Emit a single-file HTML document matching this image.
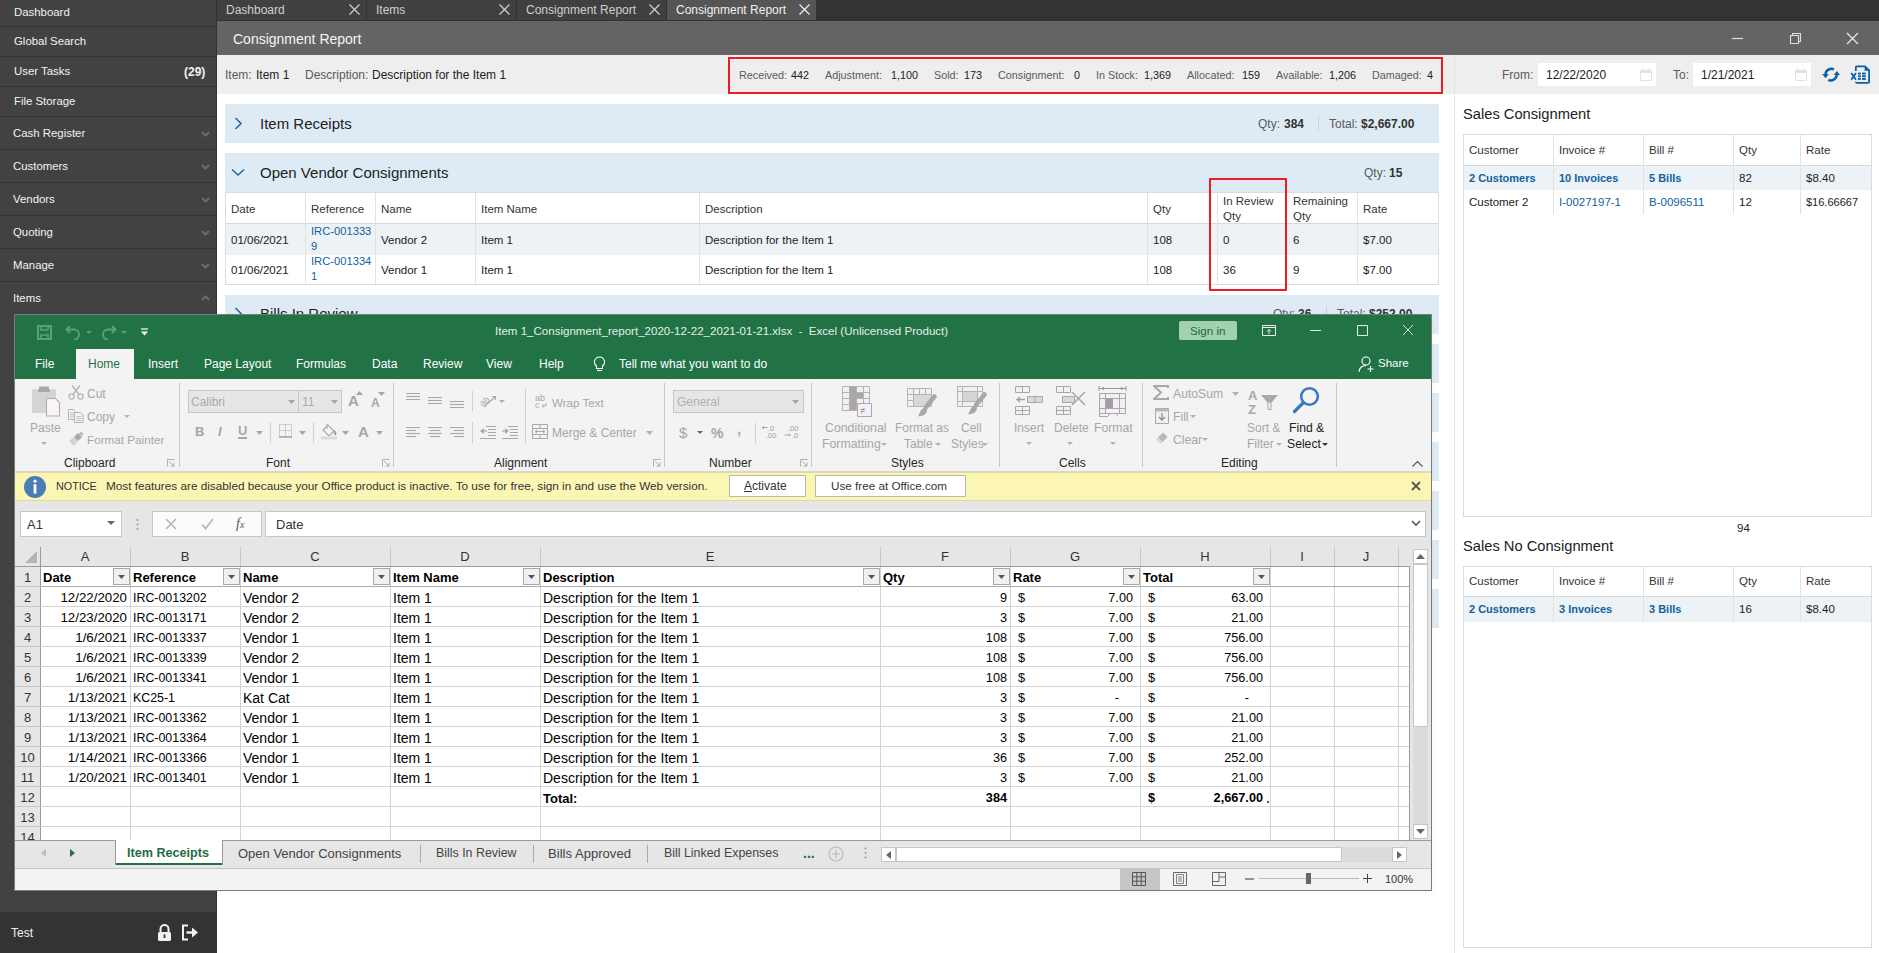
<!DOCTYPE html>
<html><head><meta charset="utf-8">
<style>
*{box-sizing:border-box;margin:0;padding:0}
html,body{width:1879px;height:953px;overflow:hidden;background:#fff;font-family:"Liberation Sans",sans-serif;}
.a{position:absolute}
.nw{white-space:nowrap}
/* sidebar */
#sb{left:0;top:0;width:216px;height:953px;background:#424242}
#sb .it{position:absolute;left:0;width:216px;color:#f2f2f2;font-size:11.4px;border-bottom:1px solid #333}
#sb .it span{position:absolute;left:14px}
#sb .chev{position:absolute;left:200px;width:7px;height:7px;border-right:1.2px solid #6a6a6a;border-bottom:1.2px solid #6a6a6a;transform:rotate(45deg)}
#vline{left:216px;top:0;width:1px;height:953px;background:#333}
/* tabs */
#tabs{left:217px;top:0;width:1662px;height:21px;background:#333}
.tab{position:absolute;top:0;height:20px;width:149px;background:#404040;color:#cfcfcf;font-size:12px}
.tab span{position:absolute;left:9px;top:3px}
.tab svg{position:absolute;left:132px;top:4px}
.lab{color:#5a5a5a;font-size:10.8px}
.val{color:#222;font-size:10.8px}
.pnl{left:225px;width:1214px;height:39px;background:#deebf5}
.th{font-size:11.5px;color:#333}
.td{font-size:11.5px;color:#222}
.lnk{color:#11629f}
.b{font-weight:bold;font-size:11px}
.cl{font-size:14px;color:#000}
</style></head>
<body>
<!-- SIDEBAR -->
<div id="sb" class="a">
  <div class="it" style="top:0;height:27px"><span style="top:6px">Dashboard</span></div>
  <div class="it" style="top:27px;height:30px"><span style="top:8px">Global Search</span></div>
  <div class="it" style="top:57px;height:30px"><span style="top:8px">User Tasks</span><b style="position:absolute;left:184px;top:8px;font-size:12px">(29)</b></div>
  <div class="it" style="top:87px;height:30px"><span style="top:8px">File Storage</span></div>
  <div class="it" style="top:117px;height:33px"><span style="left:13px;top:10px">Cash Register</span><svg style="position:absolute;left:201px;top:14px" width="9" height="6"><path d="M1 1L4.5 4.5L8 1" fill="none" stroke="#6c6c6c" stroke-width="2"/></svg></div>
  <div class="it" style="top:150px;height:33px"><span style="left:13px;top:10px">Customers</span><svg style="position:absolute;left:201px;top:14px" width="9" height="6"><path d="M1 1L4.5 4.5L8 1" fill="none" stroke="#6c6c6c" stroke-width="2"/></svg></div>
  <div class="it" style="top:183px;height:33px"><span style="left:13px;top:10px">Vendors</span><svg style="position:absolute;left:201px;top:14px" width="9" height="6"><path d="M1 1L4.5 4.5L8 1" fill="none" stroke="#6c6c6c" stroke-width="2"/></svg></div>
  <div class="it" style="top:216px;height:33px"><span style="left:13px;top:10px">Quoting</span><svg style="position:absolute;left:201px;top:14px" width="9" height="6"><path d="M1 1L4.5 4.5L8 1" fill="none" stroke="#6c6c6c" stroke-width="2"/></svg></div>
  <div class="it" style="top:249px;height:33px"><span style="left:13px;top:10px">Manage</span><svg style="position:absolute;left:201px;top:14px" width="9" height="6"><path d="M1 1L4.5 4.5L8 1" fill="none" stroke="#6c6c6c" stroke-width="2"/></svg></div>
  <div class="it" style="top:282px;height:33px;border:0"><span style="left:13px;top:10px">Items</span><svg style="position:absolute;left:201px;top:13px" width="9" height="6"><path d="M1 5L4.5 1.5L8 5" fill="none" stroke="#6c6c6c" stroke-width="2"/></svg></div>
  <div class="a" style="left:0;top:912px;width:216px;height:41px;background:#333"></div>
  <div class="a nw" style="left:11px;top:926px;color:#f2f2f2;font-size:12px">Test</div>
  <svg class="a" style="left:157px;top:924px" width="15" height="17"><path d="M3.5 8V5a4 4 0 0 1 8 0v3" fill="none" stroke="#f2f2f2" stroke-width="2"/><rect x="1" y="8" width="13" height="9" rx="1.5" fill="#f2f2f2"/><rect x="6.6" y="10.5" width="1.8" height="3.5" fill="#333"/></svg>
  <svg class="a" style="left:181px;top:924px" width="18" height="17"><path d="M7 1.5H2v14h5" fill="none" stroke="#f2f2f2" stroke-width="2"/><path d="M5.5 8.5h8" stroke="#f2f2f2" stroke-width="2.4"/><path d="M11 3.5l6 5-6 5z" fill="#f2f2f2"/></svg>
</div>
<div id="vline" class="a"></div>

<!-- TABS -->
<div id="tabs" class="a">
  <div class="tab" style="left:0"><span>Dashboard</span><svg width="11" height="11"><path d="M0.5 0.5L10.5 10.5M10.5 0.5L0.5 10.5" stroke="#d0d0d0" stroke-width="1.2"/></svg></div>
  <div class="tab" style="left:150px"><span>Items</span><svg width="11" height="11"><path d="M0.5 0.5L10.5 10.5M10.5 0.5L0.5 10.5" stroke="#d0d0d0" stroke-width="1.2"/></svg></div>
  <div class="tab" style="left:300px"><span>Consignment Report</span><svg width="11" height="11"><path d="M0.5 0.5L10.5 10.5M10.5 0.5L0.5 10.5" stroke="#d0d0d0" stroke-width="1.2"/></svg></div>
  <div class="tab" style="left:450px;background:#555;color:#f0f0f0"><span>Consignment Report</span><svg width="11" height="11"><path d="M0.5 0.5L10.5 10.5M10.5 0.5L0.5 10.5" stroke="#f0f0f0" stroke-width="1.2"/></svg></div>
</div>

<!-- REPORT HEADER -->
<div class="a" style="left:217px;top:21px;width:1662px;height:34px;background:#646464"></div>
<div class="a nw" style="left:233px;top:31px;color:#f4f4f4;font-size:14px">Consignment Report</div>


<!-- INFO BAR -->
<div class="a" style="left:217px;top:55px;width:1237px;height:39px;background:#eeeeee"></div>
<div class="a" style="left:1455px;top:55px;width:424px;height:39px;background:#eeeeee"></div>
<div class="a" style="left:1454px;top:55px;width:1px;height:898px;background:#e4e4e4"></div>
<div class="a nw lab" style="left:225px;top:68px;font-size:12px">Item:</div><div class="a nw val" style="left:256px;top:68px;font-size:12px">Item 1</div>
<div class="a nw lab" style="left:305px;top:68px;font-size:12px">Description:</div><div class="a nw val" style="left:372px;top:68px;font-size:12px">Description for the Item 1</div>
<div class="a" style="left:728px;top:57px;width:715px;height:37px;border:2.5px solid #ec1c24"></div>
<div class="a nw lab" style="left:739px;top:69px">Received:</div><div class="a nw val" style="left:791px;top:69px">442</div>
<div class="a nw lab" style="left:825px;top:69px">Adjustment:</div><div class="a nw val" style="left:891px;top:69px">1,100</div>
<div class="a nw lab" style="left:934px;top:69px">Sold:</div><div class="a nw val" style="left:964px;top:69px">173</div>
<div class="a nw lab" style="left:998px;top:69px">Consignment:</div><div class="a nw val" style="left:1074px;top:69px">0</div>
<div class="a nw lab" style="left:1096px;top:69px">In Stock:</div><div class="a nw val" style="left:1144px;top:69px">1,369</div>
<div class="a nw lab" style="left:1187px;top:69px">Allocated:</div><div class="a nw val" style="left:1242px;top:69px">159</div>
<div class="a nw lab" style="left:1276px;top:69px">Available:</div><div class="a nw val" style="left:1329px;top:69px">1,206</div>
<div class="a nw lab" style="left:1372px;top:69px">Damaged:</div><div class="a nw val" style="left:1427px;top:69px">4</div>

<!-- header window controls -->
<svg class="a" style="left:1731px;top:32px" width="14" height="12"><path d="M1 6.5H12" stroke="#e0e0e0" stroke-width="1.2"/></svg>
<svg class="a" style="left:1789px;top:32px" width="14" height="12"><path d="M1.5 3.5h8v8h-8zM3.5 3.5V1.5h8v8h-2" fill="none" stroke="#e0e0e0" stroke-width="1.1"/></svg>
<svg class="a" style="left:1846px;top:32px" width="13" height="13"><path d="M1 1L12 12M12 1L1 12" stroke="#e8e8e8" stroke-width="1.3"/></svg>

<!-- date filters -->
<div class="a nw lab" style="left:1502px;top:68px;font-size:12px">From:</div>
<div class="a" style="left:1538px;top:63px;width:118px;height:23px;background:#fff"></div>
<div class="a nw val" style="left:1546px;top:68px;font-size:12px">12/22/2020</div>
<div class="a nw lab" style="left:1673px;top:68px;font-size:12px">To:</div>
<div class="a" style="left:1693px;top:63px;width:118px;height:23px;background:#fff"></div>
<div class="a nw val" style="left:1701px;top:68px;font-size:12px">1/21/2021</div>
<svg class="a" style="left:1639px;top:67px" width="14" height="15"><path d="M1.5 3.5h11v10h-11z" fill="none" stroke="#e2e2e2" stroke-width="1"/><path d="M1.5 4h11v2h-11z" fill="#e2e2e2"/><path d="M4 1v3M10 1v3" stroke="#e2e2e2"/></svg>
<svg class="a" style="left:1794px;top:67px" width="14" height="15"><path d="M1.5 3.5h11v10h-11z" fill="none" stroke="#e2e2e2" stroke-width="1"/><path d="M1.5 4h11v2h-11z" fill="#e2e2e2"/><path d="M4 1v3M10 1v3" stroke="#e2e2e2"/></svg>
<svg class="a" style="left:1821px;top:66px" width="20" height="17"><g fill="none" stroke="#0b5fa5" stroke-width="2.4"><path d="M12.9 3.3A6 6 0 0 0 4.5 8.3"/><path d="M7.2 13.8A6 6 0 0 0 15.8 8.9"/></g><path d="M1.2 8L7.8 8L4.5 12.2z" fill="#0b5fa5"/><path d="M12.8 8.9L19 8.9L15.9 5z" fill="#0b5fa5"/></svg>
<svg class="a" style="left:1850px;top:65px" width="21" height="19"><path d="M5.8 6V2.4a1.1 1.1 0 0 1 1.1-1.1H15L19.1 5.4V16.7a1.1 1.1 0 0 1-1.1 1.1H7a1.1 1.1 0 0 1-1.1-1.1" fill="none" stroke="#0b5fa5" stroke-width="1.8"/><path d="M14.6 1.3V5.8H19.1z" fill="#0b5fa5"/><path d="M1.3 8L6 14.8M6 8L1.3 14.8" stroke="#0b5fa5" stroke-width="1.8"/><g fill="#0b5fa5"><rect x="8" y="7.6" width="2.8" height="1.9"/><rect x="12" y="7.6" width="3.8" height="1.9"/><rect x="8" y="10.3" width="2.8" height="1.9"/><rect x="12" y="10.3" width="3.8" height="1.9"/><rect x="8" y="13" width="2.8" height="1.9"/><rect x="12" y="13" width="3.8" height="1.9"/></g></svg>


<!-- REPORT PANELS -->
<div class="a pnl" style="top:104px"></div>
<svg class="a" style="left:234px;top:117px" width="9" height="13"><path d="M1.5 1L7 6.5L1.5 12" fill="none" stroke="#1f6aa5" stroke-width="1.6"/></svg>
<div class="a nw" style="left:260px;top:115px;font-size:15px;color:#222">Item Receipts</div>
<div class="a nw lab" style="left:1258px;top:117px;font-size:12px">Qty:</div><div class="a nw val" style="left:1284px;top:117px;font-size:12px;font-weight:bold;color:#333">384</div>
<div class="a" style="left:1318px;top:116px;width:1px;height:14px;background:#c8d4de"></div>
<div class="a nw lab" style="left:1329px;top:117px;font-size:12px">Total:</div><div class="a nw val" style="left:1361px;top:117px;font-size:12px;font-weight:bold;color:#333">$2,667.00</div>

<div class="a pnl" style="top:153px"></div>
<svg class="a" style="left:231px;top:168px" width="14" height="9"><path d="M1 1.5L7 7L13 1.5" fill="none" stroke="#1f6aa5" stroke-width="1.6"/></svg>
<div class="a nw" style="left:260px;top:164px;font-size:15px;color:#222">Open Vendor Consignments</div>
<div class="a nw lab" style="left:1364px;top:166px;font-size:12px">Qty:</div><div class="a nw val" style="left:1389px;top:166px;font-size:12px;font-weight:bold;color:#333">15</div>

<div class="a" style="left:225px;top:192px;width:1214px;height:93px;border:1px solid #dcdcdc;background:#fff"></div>
<div class="a" style="left:226px;top:223px;width:1212px;height:31px;background:#ecf2f6;border-top:1px solid #d8d8d8"></div>
<div class="a" style="left:226px;top:254px;width:1212px;height:1px;background:#f0f0f0"></div>
<div class="a" style="left:305px;top:193px;width:1px;height:91px;background:#e2e2e2"></div>
<div class="a" style="left:375px;top:193px;width:1px;height:91px;background:#e2e2e2"></div>
<div class="a" style="left:475px;top:193px;width:1px;height:91px;background:#e2e2e2"></div>
<div class="a" style="left:699px;top:193px;width:1px;height:91px;background:#e2e2e2"></div>
<div class="a" style="left:1147px;top:193px;width:1px;height:91px;background:#e2e2e2"></div>
<div class="a" style="left:1217px;top:193px;width:1px;height:91px;background:#e2e2e2"></div>
<div class="a" style="left:1285px;top:193px;width:1px;height:91px;background:#e2e2e2"></div>
<div class="a" style="left:1357px;top:193px;width:1px;height:91px;background:#e2e2e2"></div>

<div class="a nw th" style="left:231px;top:203px">Date</div>
<div class="a nw th" style="left:311px;top:203px">Reference</div>
<div class="a nw th" style="left:381px;top:203px">Name</div>
<div class="a nw th" style="left:481px;top:203px">Item Name</div>
<div class="a nw th" style="left:705px;top:203px">Description</div>
<div class="a nw th" style="left:1153px;top:203px">Qty</div>
<div class="a nw th" style="left:1223px;top:194px;line-height:15px">In Review<br>Qty</div>
<div class="a nw th" style="left:1293px;top:194px;line-height:15px">Remaining<br>Qty</div>
<div class="a nw th" style="left:1363px;top:203px">Rate</div>

<div class="a nw td" style="left:231px;top:234px">01/06/2021</div>
<div class="a nw td lnk" style="left:311px;top:224px;line-height:14.5px;font-size:11.2px">IRC-001333<br>9</div>
<div class="a nw td" style="left:381px;top:234px">Vendor 2</div>
<div class="a nw td" style="left:481px;top:234px">Item 1</div>
<div class="a nw td" style="left:705px;top:234px">Description for the Item 1</div>
<div class="a nw td" style="left:1153px;top:234px">108</div>
<div class="a nw td" style="left:1223px;top:234px">0</div>
<div class="a nw td" style="left:1293px;top:234px">6</div>
<div class="a nw td" style="left:1363px;top:234px">$7.00</div>

<div class="a nw td" style="left:231px;top:264px">01/06/2021</div>
<div class="a nw td lnk" style="left:311px;top:254px;line-height:14.5px;font-size:11.2px">IRC-001334<br>1</div>
<div class="a nw td" style="left:381px;top:264px">Vendor 1</div>
<div class="a nw td" style="left:481px;top:264px">Item 1</div>
<div class="a nw td" style="left:705px;top:264px">Description for the Item 1</div>
<div class="a nw td" style="left:1153px;top:264px">108</div>
<div class="a nw td" style="left:1223px;top:264px">36</div>
<div class="a nw td" style="left:1293px;top:264px">9</div>
<div class="a nw td" style="left:1363px;top:264px">$7.00</div>
<div class="a" style="left:1209px;top:178px;width:78px;height:113px;border:2.5px solid #ec1c24;border-radius:1px"></div>
<div class="a pnl" style="top:295px"></div>
<div class="a pnl" style="top:344px"></div>
<div class="a pnl" style="top:393px"></div>
<div class="a pnl" style="top:442px"></div>
<div class="a pnl" style="top:491px"></div>
<div class="a pnl" style="top:540px"></div>
<div class="a pnl" style="top:589px"></div>

<svg class="a" style="left:234px;top:307px" width="9" height="13"><path d="M1.5 1L7 6.5L1.5 12" fill="none" stroke="#1f6aa5" stroke-width="1.6"/></svg>
<div class="a nw" style="left:260px;top:305px;font-size:15px;color:#222">Bills In Review</div>
<div class="a nw lab" style="left:1273px;top:307px;font-size:12px">Qty:</div><div class="a nw val" style="left:1298px;top:307px;font-size:12px;font-weight:bold;color:#333">36</div>
<div class="a" style="left:1326px;top:306px;width:1px;height:14px;background:#c8d4de"></div>
<div class="a nw lab" style="left:1337px;top:307px;font-size:12px">Total:</div><div class="a nw val" style="left:1369px;top:307px;font-size:12px;font-weight:bold;color:#333">$252.00</div>

<!-- RIGHT PANEL -->
<div class="a nw" style="left:1463px;top:106px;font-size:14.7px;color:#222">Sales Consignment</div>
<div class="a" style="left:1463px;top:134px;width:409px;height:383px;border:1px solid #dcdcdc"></div>
<div class="a" style="left:1464px;top:165px;width:407px;height:25px;background:#ecf2f6;border-top:1px solid #d8d8d8"></div>
<div class="a" style="left:1553px;top:135px;width:1px;height:79px;background:#e2e2e2"></div>
<div class="a" style="left:1643px;top:135px;width:1px;height:79px;background:#e2e2e2"></div>
<div class="a" style="left:1733px;top:135px;width:1px;height:79px;background:#e2e2e2"></div>
<div class="a" style="left:1800px;top:135px;width:1px;height:79px;background:#e2e2e2"></div>

<div class="a nw th" style="left:1469px;top:144px">Customer</div>
<div class="a nw th" style="left:1559px;top:144px">Invoice #</div>
<div class="a nw th" style="left:1649px;top:144px">Bill #</div>
<div class="a nw th" style="left:1739px;top:144px">Qty</div>
<div class="a nw th" style="left:1806px;top:144px">Rate</div>
<div class="a nw td lnk b" style="left:1469px;top:172px">2 Customers</div>
<div class="a nw td lnk b" style="left:1559px;top:172px">10 Invoices</div>
<div class="a nw td lnk b" style="left:1649px;top:172px">5 Bills</div>
<div class="a nw td" style="left:1739px;top:172px">82</div>
<div class="a nw td" style="left:1806px;top:172px">$8.40</div>
<div class="a nw td" style="left:1469px;top:196px">Customer 2</div>
<div class="a nw td lnk" style="left:1559px;top:196px">I-0027197-1</div>
<div class="a nw td lnk" style="left:1649px;top:196px">B-0096511</div>
<div class="a nw td" style="left:1739px;top:196px">12</div>
<div class="a nw td" style="left:1806px;top:196px"><span style="font-size:11px">$16.66667</span></div>

<div class="a nw td" style="left:1737px;top:522px">94</div>
<div class="a nw" style="left:1463px;top:538px;font-size:14.7px;color:#222">Sales No Consignment</div>
<div class="a" style="left:1463px;top:566px;width:409px;height:382px;border:1px solid #dcdcdc"></div>
<div class="a" style="left:1464px;top:596px;width:407px;height:26px;background:#ecf2f6;border-top:1px solid #d8d8d8"></div>
<div class="a" style="left:1553px;top:567px;width:1px;height:55px;background:#e2e2e2"></div>
<div class="a" style="left:1643px;top:567px;width:1px;height:55px;background:#e2e2e2"></div>
<div class="a" style="left:1733px;top:567px;width:1px;height:55px;background:#e2e2e2"></div>
<div class="a" style="left:1800px;top:567px;width:1px;height:55px;background:#e2e2e2"></div>

<div class="a nw th" style="left:1469px;top:575px">Customer</div>
<div class="a nw th" style="left:1559px;top:575px">Invoice #</div>
<div class="a nw th" style="left:1649px;top:575px">Bill #</div>
<div class="a nw th" style="left:1739px;top:575px">Qty</div>
<div class="a nw th" style="left:1806px;top:575px">Rate</div>
<div class="a nw td lnk b" style="left:1469px;top:603px">2 Customers</div>
<div class="a nw td lnk b" style="left:1559px;top:603px">3 Invoices</div>
<div class="a nw td lnk b" style="left:1649px;top:603px">3 Bills</div>
<div class="a nw td" style="left:1739px;top:603px">16</div>
<div class="a nw td" style="left:1806px;top:603px">$8.40</div>

<!-- EXCEL -->
<div class="a" style="left:14px;top:314px;width:1418px;height:577px;background:#fff;border:1px solid #7a7a7a;box-shadow:1px 2px 6px rgba(0,0,0,0.03)"></div>
<div class="a" style="left:15px;top:315px;width:1416px;height:64px;background:#217346;"></div>
<svg class="a" style="left:37px;top:325px" width="15" height="15" viewBox="0 0 15 15"><path d="M1 1h13v13H1z" fill="none" stroke="#5e9f78" stroke-width="2"/><path d="M4 1v4h7V1" fill="none" stroke="#5e9f78" stroke-width="1.6"/><path d="M4 14v-4h7v4" fill="none" stroke="#5e9f78" stroke-width="1.6"/></svg>
<svg class="a" style="left:65px;top:324px" width="16" height="16" viewBox="0 0 16 16"><path d="M5 2L1.5 5.5L5 9" fill="none" stroke="#5e9f78" stroke-width="1.8"/><path d="M2 5.5h7a5 5 0 0 1 0 10" fill="none" stroke="#5e9f78" stroke-width="1.8"/></svg>
<svg class="a" style="left:86px;top:331px" width="6" height="3" viewBox="0 0 6 3"><path d="M0 0H6L3.0 3z" fill="#5e9f78"/></svg>
<svg class="a" style="left:101px;top:324px" width="16" height="16" viewBox="0 0 16 16"><path d="M11 2L14.5 5.5L11 9" fill="none" stroke="#5e9f78" stroke-width="1.8"/><path d="M14 5.5H7a5 5 0 0 0 0 10" fill="none" stroke="#5e9f78" stroke-width="1.8"/></svg>
<svg class="a" style="left:121px;top:331px" width="6" height="3" viewBox="0 0 6 3"><path d="M0 0H6L3.0 3z" fill="#5e9f78"/></svg>
<svg class="a" style="left:141px;top:328px" width="7" height="8" viewBox="0 0 7 8"><path d="M0 1h7" stroke="#fff" stroke-width="1.2"/><path d="M0 3.5h7L3.5 7.5z" fill="#fff"/></svg>
<div class="a nw" style="left:495px;top:325px;font-size:11.55px;color:#e6efe9;font-weight:normal;">Item 1_Consignment_report_2020-12-22_2021-01-21.xlsx&nbsp; -&nbsp; Excel (Unlicensed Product)</div>
<div class="a" style="left:1179px;top:321px;width:58px;height:19px;background:#a3d0b1;border-radius:2px"></div>
<div class="a nw" style="left:1190px;top:324px;font-size:11.6px;color:#1d6a3f;font-weight:normal;">Sign in</div>
<svg class="a" style="left:1262px;top:325px" width="14" height="11" viewBox="0 0 14 11"><path d="M0.5 0.5h13v10h-13z" fill="none" stroke="#e8efe9"/><path d="M0.5 2.5h13" stroke="#e8efe9"/><path d="M7 9V4.5M5 6.5l2-2 2 2" fill="none" stroke="#e8efe9"/></svg>
<svg class="a" style="left:1310px;top:329px" width="11" height="3" viewBox="0 0 11 3"><path d="M0 1.5h11" stroke="#e8efe9" stroke-width="1"/></svg>
<svg class="a" style="left:1357px;top:325px" width="11" height="11" viewBox="0 0 11 11"><path d="M0.5 0.5h10v10h-10z" fill="none" stroke="#e8efe9" stroke-width="1"/></svg>
<svg class="a" style="left:1402px;top:324px" width="12" height="12" viewBox="0 0 12 12"><path d="M1 1l10 10M11 1L1 11" stroke="#d2e3d8" stroke-width="1"/></svg>
<div class="a" style="left:76px;top:349px;width:58px;height:30px;background:#f3f3f3;"></div>
<div class="a nw" style="left:35px;top:357px;font-size:12px;color:#fff;font-weight:normal;">File</div>
<div class="a nw" style="left:88px;top:357px;font-size:12px;color:#217346;font-weight:normal;">Home</div>
<div class="a nw" style="left:148px;top:357px;font-size:12px;color:#fff;font-weight:normal;">Insert</div>
<div class="a nw" style="left:204px;top:357px;font-size:12px;color:#fff;font-weight:normal;">Page Layout</div>
<div class="a nw" style="left:296px;top:357px;font-size:12px;color:#fff;font-weight:normal;">Formulas</div>
<div class="a nw" style="left:372px;top:357px;font-size:12px;color:#fff;font-weight:normal;">Data</div>
<div class="a nw" style="left:423px;top:357px;font-size:12px;color:#fff;font-weight:normal;">Review</div>
<div class="a nw" style="left:486px;top:357px;font-size:12px;color:#fff;font-weight:normal;">View</div>
<div class="a nw" style="left:539px;top:357px;font-size:12px;color:#fff;font-weight:normal;">Help</div>
<svg class="a" style="left:593px;top:356px" width="13" height="16" viewBox="0 0 13 16"><path d="M6.5 1a5 5 0 0 0-3 9v2.5h6V10a5 5 0 0 0-3-9z" fill="none" stroke="#fff" stroke-width="1.1"/><path d="M4 14.5h5" stroke="#fff" stroke-width="1.1"/></svg>
<div class="a nw" style="left:619px;top:357px;font-size:12px;color:#fff;font-weight:normal;">Tell me what you want to do</div>
<svg class="a" style="left:1358px;top:356px" width="17" height="17" viewBox="0 0 17 17"><circle cx="8" cy="5" r="4" fill="none" stroke="#fff" stroke-width="1.1"/><path d="M1 16c0-4 3-6.5 7-6.5" fill="none" stroke="#fff" stroke-width="1.1"/><path d="M12.5 10v6M9.5 13h6" stroke="#fff" stroke-width="1.1"/></svg>
<div class="a nw" style="left:1378px;top:357px;font-size:11.5px;color:#fff;font-weight:normal;">Share</div>
<div class="a" style="left:15px;top:379px;width:1416px;height:93px;background:#f3f3f3;"></div>
<div class="a" style="left:15px;top:471px;width:1416px;height:1px;background:#d6d6d6;"></div>
<div class="a" style="left:179px;top:383px;width:1px;height:84px;background:#c8c8c8;"></div>
<div class="a" style="left:393px;top:383px;width:1px;height:84px;background:#c8c8c8;"></div>
<div class="a" style="left:664px;top:383px;width:1px;height:84px;background:#c8c8c8;"></div>
<div class="a" style="left:811px;top:383px;width:1px;height:84px;background:#c8c8c8;"></div>
<div class="a" style="left:999px;top:383px;width:1px;height:84px;background:#c8c8c8;"></div>
<div class="a" style="left:1142px;top:383px;width:1px;height:84px;background:#c8c8c8;"></div>
<div class="a" style="left:1336px;top:383px;width:1px;height:84px;background:#c8c8c8;"></div>
<div class="a nw" style="left:64px;top:456px;font-size:12px;color:#262626;font-weight:normal;">Clipboard</div>
<div class="a nw" style="left:266px;top:456px;font-size:12px;color:#262626;font-weight:normal;">Font</div>
<div class="a nw" style="left:494px;top:456px;font-size:12px;color:#262626;font-weight:normal;">Alignment</div>
<div class="a nw" style="left:709px;top:456px;font-size:12px;color:#262626;font-weight:normal;">Number</div>
<div class="a nw" style="left:891px;top:456px;font-size:12px;color:#262626;font-weight:normal;">Styles</div>
<div class="a nw" style="left:1059px;top:456px;font-size:12px;color:#262626;font-weight:normal;">Cells</div>
<div class="a nw" style="left:1221px;top:456px;font-size:12px;color:#262626;font-weight:normal;">Editing</div>
<svg class="a" style="left:167px;top:459px" width="8" height="8" viewBox="0 0 8 8"><path d="M0.5 7.5V0.5h7" fill="none" stroke="#b0b0b0"/><path d="M2 2l5 5M7 3.5V7H3.5" fill="none" stroke="#b0b0b0"/></svg>
<svg class="a" style="left:382px;top:459px" width="8" height="8" viewBox="0 0 8 8"><path d="M0.5 7.5V0.5h7" fill="none" stroke="#b0b0b0"/><path d="M2 2l5 5M7 3.5V7H3.5" fill="none" stroke="#b0b0b0"/></svg>
<svg class="a" style="left:653px;top:459px" width="8" height="8" viewBox="0 0 8 8"><path d="M0.5 7.5V0.5h7" fill="none" stroke="#b0b0b0"/><path d="M2 2l5 5M7 3.5V7H3.5" fill="none" stroke="#b0b0b0"/></svg>
<svg class="a" style="left:800px;top:459px" width="8" height="8" viewBox="0 0 8 8"><path d="M0.5 7.5V0.5h7" fill="none" stroke="#b0b0b0"/><path d="M2 2l5 5M7 3.5V7H3.5" fill="none" stroke="#b0b0b0"/></svg>
<svg class="a" style="left:1412px;top:461px" width="11" height="6" viewBox="0 0 11 6"><path d="M0.5 5.5L5.5 0.5L10.5 5.5" fill="none" stroke="#555" stroke-width="1.1"/></svg>
<svg class="a" style="left:31px;top:386px" width="30" height="31" viewBox="0 0 30 31"><rect x="1" y="3" width="24" height="24" rx="1.5" fill="#d6d3d6"/><rect x="8" y="0.5" width="10" height="5" rx="1" fill="#a9a9a9"/><rect x="7" y="4" width="12" height="2" fill="#a9a9a9"/><path d="M15.5 12.5h9l4 4v13.5h-13z" fill="#f8f4f8" stroke="#b0b0b0" stroke-width="1.1"/></svg>
<div class="a nw" style="left:30px;top:421px;font-size:12px;color:#a6a6a6;font-weight:normal;">Paste</div>
<svg class="a" style="left:41px;top:442px" width="6" height="3" viewBox="0 0 6 3"><path d="M0 0H6L3.0 3z" fill="#b0b0b0"/></svg>
<svg class="a" style="left:68px;top:385px" width="16" height="15" viewBox="0 0 16 15"><circle cx="3.5" cy="11.5" r="2.6" fill="none" stroke="#b4b4b4" stroke-width="1.3"/><circle cx="12.5" cy="11.5" r="2.6" fill="none" stroke="#b4b4b4" stroke-width="1.3"/><path d="M5 9.5L12 0.5M11 9.5L4 0.5" stroke="#b4b4b4" stroke-width="1.3"/></svg>
<div class="a nw" style="left:87px;top:387px;font-size:12px;color:#a6a6a6;font-weight:normal;">Cut</div>
<svg class="a" style="left:68px;top:409px" width="16" height="14" viewBox="0 0 16 14"><path d="M0.5 0.5h5l2 2v8h-7z" fill="#f3f3f3" stroke="#b4b4b4"/><path d="M6.5 3.5h6l2.5 2.5v7.5h-8.5z" fill="#f3f3f3" stroke="#b4b4b4"/><path d="M2 4h4M2 6h4M2 8h4M8.5 7.5h5M8.5 9.5h5M8.5 11.5h5" stroke="#b4b4b4" stroke-width="0.8"/></svg>
<div class="a nw" style="left:87px;top:410px;font-size:12px;color:#a6a6a6;font-weight:normal;">Copy</div>
<svg class="a" style="left:124px;top:415px" width="6" height="3" viewBox="0 0 6 3"><path d="M0 0H6L3.0 3z" fill="#b4b4b4"/></svg>
<svg class="a" style="left:68px;top:431px" width="16" height="15" viewBox="0 0 16 15"><path d="M1 10l5-4 4 4-4 5z" fill="#d2d2d2"/><path d="M6 6l4-4 4 4-4 4z" fill="#a8a8a8"/><path d="M11 2.5l2-2 2.5 2.5-2 2z" fill="#b8b8b8"/></svg>
<div class="a nw" style="left:87px;top:433px;font-size:11.7px;color:#a6a6a6;font-weight:normal;">Format Painter</div>
<div class="a" style="left:188px;top:390px;width:111px;height:23px;background:#e6e6e6;border:1px solid #c6c6c6;"></div>
<div class="a" style="left:298px;top:390px;width:44px;height:23px;background:#e6e6e6;border:1px solid #c6c6c6;"></div>
<div class="a nw" style="left:191px;top:395px;font-size:12px;color:#b0a8b0;font-weight:normal;">Calibri</div>
<div class="a nw" style="left:302px;top:395px;font-size:12px;color:#b0a8b0;font-weight:normal;">11</div>
<svg class="a" style="left:288px;top:400px" width="7" height="4" viewBox="0 0 7 4"><path d="M0 0H7L3.5 4z" fill="#a6a6a6"/></svg>
<svg class="a" style="left:331px;top:400px" width="7" height="4" viewBox="0 0 7 4"><path d="M0 0H7L3.5 4z" fill="#a6a6a6"/></svg>
<div class="a nw" style="left:348px;top:392px;font-size:15px;color:#a6a6a6;font-weight:normal;font-weight:bold">A</div>
<svg class="a" style="left:356px;top:391px" width="7" height="4" viewBox="0 0 7 4"><path d="M0 4h7L3.5 0z" fill="#a6a6a6"/></svg>
<div class="a nw" style="left:371px;top:396px;font-size:12px;color:#a6a6a6;font-weight:normal;font-weight:bold">A</div>
<svg class="a" style="left:378px;top:392px" width="7" height="4" viewBox="0 0 7 4"><path d="M0 0H7L3.5 4z" fill="#a6a6a6"/></svg>
<div class="a nw" style="left:195px;top:424px;font-size:13px;color:#a6a6a6;font-weight:bold;">B</div>
<div class="a nw" style="left:218px;top:424px;font-size:13px;color:#a6a6a6;font-weight:bold;"><i>I</i></div>
<div class="a nw" style="left:238px;top:423px;font-size:13px;color:#a6a6a6;font-weight:bold;">U</div>
<div class="a" style="left:238px;top:437px;width:9px;height:1.5px;background:#a6a6a6;"></div>
<svg class="a" style="left:256px;top:431px" width="7" height="4" viewBox="0 0 7 4"><path d="M0 0H7L3.5 4z" fill="#a6a6a6"/></svg>
<div class="a" style="left:270px;top:422px;width:1px;height:21px;background:#cfcfcf;"></div>
<svg class="a" style="left:279px;top:424px" width="13" height="14" viewBox="0 0 13 14"><path d="M0.5 0.5h12v12h-12zM6.5 0.5v12M0.5 6.5h12" fill="none" stroke="#a8a8a8" stroke-dasharray="1 1"/><path d="M0 13h13" stroke="#a0a0a0" stroke-width="1.4"/></svg>
<svg class="a" style="left:299px;top:431px" width="7" height="4" viewBox="0 0 7 4"><path d="M0 0H7L3.5 4z" fill="#a6a6a6"/></svg>
<div class="a" style="left:313px;top:422px;width:1px;height:21px;background:#cfcfcf;"></div>
<svg class="a" style="left:321px;top:423px" width="17" height="17" viewBox="0 0 17 17"><path d="M2 7l5-5 6 6-5 5z" fill="none" stroke="#a8a8a8" stroke-width="1.2"/><path d="M6 1v5" stroke="#a8a8a8"/><path d="M13 8q2 2 1 4" stroke="#a0a0a0" stroke-width="2" fill="none"/><rect x="0" y="13.5" width="16" height="3" fill="#e0d8e0"/></svg>
<svg class="a" style="left:342px;top:431px" width="7" height="4" viewBox="0 0 7 4"><path d="M0 0H7L3.5 4z" fill="#a6a6a6"/></svg>
<div class="a nw" style="left:358px;top:423px;font-size:15px;color:#a6a6a6;font-weight:bold;">A</div>
<svg class="a" style="left:376px;top:431px" width="7" height="4" viewBox="0 0 7 4"><path d="M0 0H7L3.5 4z" fill="#a6a6a6"/></svg>
<svg class="a" style="left:406px;top:393px" width="15" height="10" viewBox="0 0 15 10"><path d="M0 0.5H14" stroke="#a8a8a8" stroke-width="1.1"/><path d="M0 3.5H14" stroke="#a8a8a8" stroke-width="1.1"/><path d="M0 6.5H14" stroke="#a8a8a8" stroke-width="1.1"/></svg>
<svg class="a" style="left:428px;top:397px" width="15" height="10" viewBox="0 0 15 10"><path d="M0 0.5H14" stroke="#a8a8a8" stroke-width="1.1"/><path d="M0 3.5H14" stroke="#a8a8a8" stroke-width="1.1"/><path d="M0 6.5H14" stroke="#a8a8a8" stroke-width="1.1"/></svg>
<svg class="a" style="left:450px;top:401px" width="15" height="10" viewBox="0 0 15 10"><path d="M0 0.5H14" stroke="#a8a8a8" stroke-width="1.1"/><path d="M0 3.5H14" stroke="#a8a8a8" stroke-width="1.1"/><path d="M0 6.5H14" stroke="#a8a8a8" stroke-width="1.1"/></svg>
<div class="a" style="left:472px;top:391px;width:1px;height:20px;background:#cfcfcf;"></div>
<svg class="a" style="left:480px;top:394px" width="17" height="14" viewBox="0 0 17 14"><text x="0" y="10" font-family="Liberation Sans" font-size="9" fill="#a8a8a8" transform="rotate(-35 5 8)">ab</text><path d="M4 13L15 3M12 2.5h3.5V6" fill="none" stroke="#a8a8a8" stroke-width="1.1"/></svg>
<svg class="a" style="left:499px;top:400px" width="6" height="3" viewBox="0 0 6 3"><path d="M0 0H6L3.0 3z" fill="#b0b0b0"/></svg>
<div class="a" style="left:525px;top:389px;width:1px;height:54px;background:#cfcfcf;"></div>
<svg class="a" style="left:535px;top:393px" width="13" height="16" viewBox="0 0 13 16"><text x="0" y="7.5" font-family="Liberation Sans" font-size="9" fill="#a8a8a8">ab</text><text x="0" y="15" font-family="Liberation Sans" font-size="9" fill="#a8a8a8">c</text><path d="M11 10v3H7M8.5 11.5L7 13l1.5 1.5" fill="none" stroke="#a8a8a8" stroke-width="0.9"/></svg>
<div class="a nw" style="left:552px;top:396px;font-size:11.6px;color:#a6a6a6;font-weight:normal;">Wrap Text</div>
<svg class="a" style="left:406px;top:427px" width="15" height="13" viewBox="0 0 15 13"><path d="M0 0.5H14" stroke="#a8a8a8" stroke-width="1.1"/><path d="M0 3.5H10" stroke="#a8a8a8" stroke-width="1.1"/><path d="M0 6.5H14" stroke="#a8a8a8" stroke-width="1.1"/><path d="M0 9.5H10" stroke="#a8a8a8" stroke-width="1.1"/></svg>
<svg class="a" style="left:428px;top:427px" width="15" height="13" viewBox="0 0 15 13"><path d="M0.0 0.5H14.0" stroke="#a8a8a8" stroke-width="1.1"/><path d="M2.0 3.5H12.0" stroke="#a8a8a8" stroke-width="1.1"/><path d="M0.0 6.5H14.0" stroke="#a8a8a8" stroke-width="1.1"/><path d="M2.0 9.5H12.0" stroke="#a8a8a8" stroke-width="1.1"/></svg>
<svg class="a" style="left:450px;top:427px" width="15" height="13" viewBox="0 0 15 13"><path d="M0 0.5H14" stroke="#a8a8a8" stroke-width="1.1"/><path d="M4 3.5H14" stroke="#a8a8a8" stroke-width="1.1"/><path d="M0 6.5H14" stroke="#a8a8a8" stroke-width="1.1"/><path d="M4 9.5H14" stroke="#a8a8a8" stroke-width="1.1"/></svg>
<div class="a" style="left:472px;top:422px;width:1px;height:21px;background:#cfcfcf;"></div>
<svg class="a" style="left:480px;top:426px" width="16" height="13" viewBox="0 0 16 13"><path d="M6 0.5h10M8 3.5h8M8 6.5h8M8 9.5h8M0 12.5h16" stroke="#a8a8a8" stroke-width="1.1"/><path d="M0 5l4-3v6z" fill="#a8a8a8"/><path d="M4 5h3" stroke="#a8a8a8" stroke-width="1.2"/></svg>
<svg class="a" style="left:502px;top:426px" width="16" height="13" viewBox="0 0 16 13"><path d="M6 0.5h10M8 3.5h8M8 6.5h8M8 9.5h8M0 12.5h16" stroke="#a8a8a8" stroke-width="1.1"/><path d="M7 5L3 2v6z" fill="#a8a8a8"/><path d="M0 5h3" stroke="#a8a8a8" stroke-width="1.2"/></svg>
<svg class="a" style="left:532px;top:424px" width="16" height="15" viewBox="0 0 16 15"><path d="M0.5 0.5h15v14h-15zM0.5 4.5h15M0.5 10.5h15M8 0.5v4M8 10.5v4M3 7.5h10M3 7.5l2-1.5M3 7.5l2 1.5M13 7.5l-2-1.5M13 7.5l-2 1.5" fill="none" stroke="#a8a8a8" stroke-width="1"/></svg>
<div class="a nw" style="left:552px;top:426px;font-size:12px;color:#a6a6a6;font-weight:normal;">Merge &amp; Center</div>
<svg class="a" style="left:646px;top:431px" width="7" height="4" viewBox="0 0 7 4"><path d="M0 0H7L3.5 4z" fill="#b0b0b0"/></svg>
<div class="a" style="left:673px;top:390px;width:131px;height:23px;background:#e6e6e6;border:1px solid #c6c6c6;"></div>
<div class="a nw" style="left:677px;top:395px;font-size:12px;color:#b0b0b0;font-weight:normal;">General</div>
<svg class="a" style="left:792px;top:400px" width="7" height="4" viewBox="0 0 7 4"><path d="M0 0H7L3.5 4z" fill="#a6a6a6"/></svg>
<div class="a nw" style="left:679px;top:424px;font-size:15px;color:#a6a6a6;font-weight:normal;">$</div>
<svg class="a" style="left:697px;top:431px" width="6" height="3" viewBox="0 0 6 3"><path d="M0 0H6L3.0 3z" fill="#666"/></svg>
<div class="a nw" style="left:711px;top:425px;font-size:14px;color:#a6a6a6;font-weight:bold;">%</div>
<div class="a nw" style="left:737px;top:420px;font-size:15px;color:#a6a6a6;font-weight:bold;">,</div>
<div class="a" style="left:755px;top:423px;width:1px;height:20px;background:#cfcfcf;"></div>
<svg class="a" style="left:762px;top:424px" width="17" height="15" viewBox="0 0 17 15"><text x="6" y="6.5" font-family="Liberation Sans" font-size="7.5" fill="#a0a0a0">.0</text><text x="4" y="14" font-family="Liberation Sans" font-size="7.5" fill="#a0a0a0">.00</text><path d="M0.5 3.5h5M2 2L0.5 3.5 2 5" fill="none" stroke="#a0a0a0" stroke-width="0.9"/></svg>
<svg class="a" style="left:784px;top:424px" width="17" height="15" viewBox="0 0 17 15"><text x="4" y="6.5" font-family="Liberation Sans" font-size="7.5" fill="#a0a0a0">.00</text><text x="8" y="14" font-family="Liberation Sans" font-size="7.5" fill="#a0a0a0">.0</text><path d="M0.5 11h6M5 9.5L6.5 11 5 12.5" fill="none" stroke="#a0a0a0" stroke-width="0.9"/></svg>
<svg class="a" style="left:842px;top:386px" width="31" height="32" viewBox="0 0 31 32"><path d="M0.5 0.5h27v24h-27z" fill="#f6eef6" stroke="#b4b4b4"/><path d="M0.5 6.5h27M0.5 12.5h27M0.5 18.5h27M7.5 0.5v24M14.5 0.5v24M21.5 0.5v24" stroke="#b4b4b4"/><rect x="8" y="1" width="6" height="23" fill="#a8a8a8"/><rect x="8" y="7" width="13" height="5" fill="#a8a8a8"/><path d="M15.5 17.5h14v13h-14z" fill="#f6eef6" stroke="#a8a8a8"/><text x="18" y="28" font-family="Liberation Sans" font-size="10" fill="#909090">&#8800;</text></svg>
<div class="a nw" style="left:825px;top:421px;font-size:12.3px;color:#a6a6a6;font-weight:normal;">Conditional</div>
<div class="a nw" style="left:822px;top:437px;font-size:12.3px;color:#a6a6a6;font-weight:normal;">Formatting</div>
<svg class="a" style="left:881px;top:443px" width="6" height="3" viewBox="0 0 6 3"><path d="M0 0H6L3.0 3z" fill="#b0b0b0"/></svg>
<svg class="a" style="left:907px;top:388px" width="30" height="29" viewBox="0 0 30 29"><path d="M0.5 0.5h24v18h-24z" fill="#f3eef3" stroke="#b4b4b4"/><path d="M0.5 6.5h24M0.5 12.5h24M6.5 0.5v18M12.5 0.5v18M18.5 0.5v18" stroke="#b4b4b4"/><rect x="7" y="7" width="17" height="11" fill="#d8d8d8"/><path d="M27.5 8.5L19 19" stroke="#a8a8a8" stroke-width="4.5" stroke-linecap="round"/><path d="M18 19.5q-4 1-5 5l-2 4 5-1q4-2 4-6z" fill="#a8a8a8"/></svg>
<div class="a nw" style="left:895px;top:421px;font-size:12px;color:#a6a6a6;font-weight:normal;">Format as</div>
<div class="a nw" style="left:904px;top:437px;font-size:12px;color:#a6a6a6;font-weight:normal;">Table</div>
<svg class="a" style="left:935px;top:443px" width="6" height="3" viewBox="0 0 6 3"><path d="M0 0H6L3.0 3z" fill="#b0b0b0"/></svg>
<svg class="a" style="left:957px;top:386px" width="30" height="31" viewBox="0 0 30 31"><path d="M0.5 0.5h25v20h-25z" fill="#f3eef3" stroke="#b4b4b4"/><path d="M0.5 5.5h25M0.5 15.5h25M5.5 0.5v20M20.5 0.5v20" stroke="#b4b4b4"/><rect x="6" y="6" width="14" height="9" fill="#d4d4d4"/><path d="M27.5 8.5L19 19" stroke="#a8a8a8" stroke-width="4.5" stroke-linecap="round"/><path d="M18 19.5q-4 1-5 5l-2 4 5-1q4-2 4-6z" fill="#a8a8a8"/></svg>
<div class="a nw" style="left:961px;top:421px;font-size:12px;color:#a6a6a6;font-weight:normal;">Cell</div>
<div class="a nw" style="left:951px;top:437px;font-size:12px;color:#a6a6a6;font-weight:normal;">Styles</div>
<svg class="a" style="left:982px;top:443px" width="6" height="3" viewBox="0 0 6 3"><path d="M0 0H6L3.0 3z" fill="#b0b0b0"/></svg>
<svg class="a" style="left:1015px;top:386px" width="28" height="29" viewBox="0 0 28 29"><path d="M0.5 0.5h14v6h-14zM7.5 0.5v6M0.5 20.5h14v8h-14zM0.5 24.5h14M7.5 20.5v8" fill="#f6eef6" stroke="#a8a8a8"/><path d="M12.5 10.5h15v6h-15zM20 10.5v6" fill="#d8d8d8" stroke="#a8a8a8"/><path d="M2 13.5h8M5 11l-3 2.5L5 16" fill="none" stroke="#a0a0a0" stroke-width="1.4"/></svg>
<div class="a nw" style="left:1014px;top:421px;font-size:12px;color:#a6a6a6;font-weight:normal;">Insert</div>
<svg class="a" style="left:1026px;top:442px" width="6" height="3" viewBox="0 0 6 3"><path d="M0 0H6L3.0 3z" fill="#b0b0b0"/></svg>
<svg class="a" style="left:1056px;top:386px" width="31" height="29" viewBox="0 0 31 29"><path d="M0.5 0.5h14v6h-14zM7.5 0.5v6M0.5 20.5h14v8h-14zM0.5 24.5h14M7.5 20.5v8" fill="#f6eef6" stroke="#a8a8a8"/><path d="M6.5 10.5h12v6h-12z" fill="#d8d8d8" stroke="#a8a8a8"/><path d="M16 6l13 13M29 6L16 19" stroke="#a8a8a8" stroke-width="1.6"/></svg>
<div class="a nw" style="left:1054px;top:421px;font-size:12px;color:#a6a6a6;font-weight:normal;">Delete</div>
<svg class="a" style="left:1067px;top:442px" width="6" height="3" viewBox="0 0 6 3"><path d="M0 0H6L3.0 3z" fill="#b0b0b0"/></svg>
<svg class="a" style="left:1098px;top:385px" width="30" height="32" viewBox="0 0 30 32"><path d="M1 3.5h27M1 1v5M28 1v5M4 3.5l2-1.5M4 3.5l2 1.5M25 3.5l-2-1.5M25 3.5l-2 1.5" fill="none" stroke="#909090" stroke-width="0.9"/><path d="M1.5 8.5h26v20h-26z" fill="#f6eef6" stroke="#a8a8a8"/><path d="M1.5 13.5h26M1.5 23.5h26M7.5 8.5v20M21.5 8.5v20" stroke="#a8a8a8"/><rect x="8" y="14" width="7" height="9" fill="#a0a0a0"/><path d="M1.5 28.5v3h8l3-3M13 28.5h6v3" fill="none" stroke="#a8a8a8"/></svg>
<div class="a nw" style="left:1094px;top:421px;font-size:12.2px;color:#a6a6a6;font-weight:normal;">Format</div>
<svg class="a" style="left:1110px;top:442px" width="6" height="3" viewBox="0 0 6 3"><path d="M0 0H6L3.0 3z" fill="#b0b0b0"/></svg>
<svg class="a" style="left:1153px;top:385px" width="16" height="15" viewBox="0 0 16 15"><path d="M15 3V1H1l7 6.5L1 14h14v-2" fill="none" stroke="#a8a8a8" stroke-width="2"/></svg>
<div class="a nw" style="left:1173px;top:387px;font-size:12.2px;color:#a6a6a6;font-weight:normal;">AutoSum</div>
<svg class="a" style="left:1232px;top:392px" width="7" height="4" viewBox="0 0 7 4"><path d="M0 0H7L3.5 4z" fill="#b0b0b0"/></svg>
<svg class="a" style="left:1155px;top:408px" width="14" height="16" viewBox="0 0 14 16"><path d="M0.5 0.5h13v15h-13z" fill="#f3eef3" stroke="#a8a8a8"/><rect x="0.5" y="0.5" width="13" height="3" fill="#b8b8b8"/><path d="M7 5v7M4 9l3 3 3-3" fill="none" stroke="#909090" stroke-width="1.3"/></svg>
<div class="a nw" style="left:1173px;top:410px;font-size:12.2px;color:#a6a6a6;font-weight:normal;">Fill</div>
<svg class="a" style="left:1190px;top:415px" width="6" height="3" viewBox="0 0 6 3"><path d="M0 0H6L3.0 3z" fill="#b0b0b0"/></svg>
<svg class="a" style="left:1155px;top:432px" width="13" height="13" viewBox="0 0 13 13"><path d="M8 0.5l4.5 4.5-5 5-4.5-4.5z" fill="#b8b8b8"/><path d="M3 5.5l4.5 4.5-2 2-4.5-4.5z" fill="#d8d8d8"/></svg>
<div class="a nw" style="left:1173px;top:433px;font-size:12.2px;color:#a6a6a6;font-weight:normal;">Clear</div>
<svg class="a" style="left:1202px;top:438px" width="6" height="3" viewBox="0 0 6 3"><path d="M0 0H6L3.0 3z" fill="#b0b0b0"/></svg>
<svg class="a" style="left:1248px;top:387px" width="31" height="28" viewBox="0 0 31 28"><text x="0" y="13" font-family="Liberation Sans" font-size="13" fill="#a8a8a8" font-weight="bold">A</text><text x="0" y="27" font-family="Liberation Sans" font-size="13" fill="#a8a8a8" font-weight="bold">Z</text><path d="M13 8h17l-6.5 7.5V23h-4v-7.5z" fill="#a8a8a8"/><path d="M20.5 15.5V22h2v-6.5" fill="#f3f3f3"/></svg>
<div class="a nw" style="left:1247px;top:421px;font-size:12px;color:#a6a6a6;font-weight:normal;">Sort &amp;</div>
<div class="a nw" style="left:1247px;top:437px;font-size:12px;color:#a6a6a6;font-weight:normal;">Filter</div>
<svg class="a" style="left:1276px;top:443px" width="6" height="3" viewBox="0 0 6 3"><path d="M0 0H6L3.0 3z" fill="#b0b0b0"/></svg>
<svg class="a" style="left:1292px;top:386px" width="30" height="29" viewBox="0 0 30 29"><circle cx="17.5" cy="10.5" r="8.3" fill="none" stroke="#3b78c2" stroke-width="2.6"/><path d="M11.5 16.5L2.5 25.5" stroke="#3b78c2" stroke-width="3.2" stroke-linecap="round"/></svg>
<div class="a nw" style="left:1289px;top:421px;font-size:12.2px;color:#222;font-weight:normal;">Find &amp;</div>
<div class="a nw" style="left:1287px;top:437px;font-size:12.2px;color:#222;font-weight:normal;">Select</div>
<svg class="a" style="left:1322px;top:443px" width="6" height="3" viewBox="0 0 6 3"><path d="M0 0H6L3.0 3z" fill="#333"/></svg>
<div class="a" style="left:15px;top:472px;width:1416px;height:29px;background:#fcf6b4;border-top:1px solid #e3dc94;border-bottom:1px solid #e3dc94"></div>
<svg class="a" style="left:24px;top:476px" width="22" height="22" viewBox="0 0 22 22"><circle cx="11" cy="11" r="11" fill="#4a7cb6"/><circle cx="11" cy="5.2" r="1.6" fill="#fff"/><rect x="9.6" y="8.2" width="2.8" height="9.4" fill="#fff"/></svg>
<div class="a nw" style="left:56px;top:480px;font-size:10.8px;color:#333;font-weight:normal;">NOTICE</div>
<div class="a nw" style="left:106px;top:479px;font-size:11.75px;color:#333;font-weight:normal;">Most features are disabled because your Office product is inactive. To use for free, sign in and use the Web version.</div>
<div class="a" style="left:729px;top:475px;width:77px;height:22px;background:#fff;border:1px solid #b8b8b8;"></div>
<div class="a nw" style="left:744px;top:479px;font-size:12px;color:#333;font-weight:normal;"><u>A</u>ctivate</div>
<div class="a" style="left:815px;top:475px;width:151px;height:22px;background:#fff;border:1px solid #b8b8b8;"></div>
<div class="a nw" style="left:831px;top:479px;font-size:11.7px;color:#333;font-weight:normal;">Use free at Office.com</div>
<svg class="a" style="left:1411px;top:481px" width="10" height="10" viewBox="0 0 10 10"><path d="M1 1l8 8M9 1L1 9" stroke="#555" stroke-width="1.8"/></svg>
<div class="a" style="left:15px;top:501px;width:1416px;height:46px;background:#e6e6e6;"></div>
<div class="a" style="left:20px;top:511px;width:102px;height:26px;background:#fff;border:1px solid #c6c6c6;"></div>
<div class="a nw" style="left:27px;top:517px;font-size:13px;color:#333;font-weight:normal;">A1</div>
<svg class="a" style="left:107px;top:521px" width="8" height="4" viewBox="0 0 8 4"><path d="M0 0H8L4.0 4z" fill="#666"/></svg>
<svg class="a" style="left:136px;top:519px" width="3" height="11" viewBox="0 0 3 11"><circle cx="1.5" cy="1" r="1" fill="#999"/><circle cx="1.5" cy="5.5" r="1" fill="#999"/><circle cx="1.5" cy="10" r="1" fill="#999"/></svg>
<div class="a" style="left:152px;top:511px;width:110px;height:26px;background:#fbfbfb;border:1px solid #c6c6c6;"></div>
<svg class="a" style="left:165px;top:518px" width="12" height="12" viewBox="0 0 12 12"><path d="M1 1l10 10M11 1L1 11" stroke="#b0b0b0" stroke-width="1.4"/></svg>
<svg class="a" style="left:201px;top:518px" width="13" height="12" viewBox="0 0 13 12"><path d="M1 6.5l3.5 4L12 1" fill="none" stroke="#b8b8b8" stroke-width="1.8"/></svg>
<div class="a nw" style="left:236px;top:516px;font-size:14px;color:#555;font-weight:normal;font-family:'Liberation Serif'"><i>f</i><span style="font-size:10px"><i>x</i></span></div>
<div class="a" style="left:265px;top:511px;width:1161px;height:26px;background:#fff;border:1px solid #c6c6c6;"></div>
<div class="a nw" style="left:276px;top:517px;font-size:13px;color:#333;font-weight:normal;">Date</div>
<svg class="a" style="left:1411px;top:520px" width="10" height="7" viewBox="0 0 10 7"><path d="M1 1l4 4 4-4" fill="none" stroke="#555" stroke-width="1.6"/></svg>
<div class="a" style="left:15px;top:547px;width:1395px;height:19px;background:#e6e6e6;"></div>
<div class="a" style="left:15px;top:566px;width:26px;height:274px;background:#e6e6e6;"></div>
<svg class="a" style="left:25px;top:551px" width="12" height="12" viewBox="0 0 12 12"><path d="M12 0V12H0z" fill="#b4b4b4"/></svg>
<div class="a" style="left:15px;top:566px;width:1395px;height:1px;background:#9b9b9b;"></div>
<div class="a" style="left:40px;top:547px;width:1px;height:293px;background:#9b9b9b;"></div>
<div class="a" style="left:41px;top:567px;width:1368px;height:273px;background:#fff;"></div>
<div class="a" style="left:130px;top:547px;width:1px;height:19px;background:#c6c6c6;"></div>
<div class="a" style="left:130px;top:567px;width:1px;height:273px;background:#d4d4d4;"></div>
<div class="a nw" style="left:40px;top:549px;width:90px;text-align:center;font-size:13px;color:#333">A</div>
<div class="a" style="left:240px;top:547px;width:1px;height:19px;background:#c6c6c6;"></div>
<div class="a" style="left:240px;top:567px;width:1px;height:273px;background:#d4d4d4;"></div>
<div class="a nw" style="left:130px;top:549px;width:110px;text-align:center;font-size:13px;color:#333">B</div>
<div class="a" style="left:390px;top:547px;width:1px;height:19px;background:#c6c6c6;"></div>
<div class="a" style="left:390px;top:567px;width:1px;height:273px;background:#d4d4d4;"></div>
<div class="a nw" style="left:240px;top:549px;width:150px;text-align:center;font-size:13px;color:#333">C</div>
<div class="a" style="left:540px;top:547px;width:1px;height:19px;background:#c6c6c6;"></div>
<div class="a" style="left:540px;top:567px;width:1px;height:273px;background:#d4d4d4;"></div>
<div class="a nw" style="left:390px;top:549px;width:150px;text-align:center;font-size:13px;color:#333">D</div>
<div class="a" style="left:880px;top:547px;width:1px;height:19px;background:#c6c6c6;"></div>
<div class="a" style="left:880px;top:567px;width:1px;height:273px;background:#d4d4d4;"></div>
<div class="a nw" style="left:540px;top:549px;width:340px;text-align:center;font-size:13px;color:#333">E</div>
<div class="a" style="left:1010px;top:547px;width:1px;height:19px;background:#c6c6c6;"></div>
<div class="a" style="left:1010px;top:567px;width:1px;height:273px;background:#d4d4d4;"></div>
<div class="a nw" style="left:880px;top:549px;width:130px;text-align:center;font-size:13px;color:#333">F</div>
<div class="a" style="left:1140px;top:547px;width:1px;height:19px;background:#c6c6c6;"></div>
<div class="a" style="left:1140px;top:567px;width:1px;height:273px;background:#d4d4d4;"></div>
<div class="a nw" style="left:1010px;top:549px;width:130px;text-align:center;font-size:13px;color:#333">G</div>
<div class="a" style="left:1270px;top:547px;width:1px;height:19px;background:#c6c6c6;"></div>
<div class="a" style="left:1270px;top:567px;width:1px;height:273px;background:#d4d4d4;"></div>
<div class="a nw" style="left:1140px;top:549px;width:130px;text-align:center;font-size:13px;color:#333">H</div>
<div class="a" style="left:1334px;top:547px;width:1px;height:19px;background:#c6c6c6;"></div>
<div class="a" style="left:1334px;top:567px;width:1px;height:273px;background:#d4d4d4;"></div>
<div class="a nw" style="left:1270px;top:549px;width:64px;text-align:center;font-size:13px;color:#333">I</div>
<div class="a" style="left:1398px;top:547px;width:1px;height:19px;background:#c6c6c6;"></div>
<div class="a" style="left:1398px;top:567px;width:1px;height:273px;background:#d4d4d4;"></div>
<div class="a nw" style="left:1334px;top:549px;width:64px;text-align:center;font-size:13px;color:#333">J</div>
<div class="a" style="left:1409px;top:566px;width:1px;height:274px;background:#9b9b9b;"></div>
<div class="a" style="left:41px;top:586px;width:1368px;height:1px;background:#d4d4d4;"></div>
<div class="a" style="left:15px;top:586px;width:26px;height:1px;background:#c6c6c6;"></div>
<div class="a nw" style="left:15px;top:570px;width:25px;text-align:center;font-size:13px;color:#333">1</div>
<div class="a" style="left:41px;top:606px;width:1368px;height:1px;background:#d4d4d4;"></div>
<div class="a" style="left:15px;top:606px;width:26px;height:1px;background:#c6c6c6;"></div>
<div class="a nw" style="left:15px;top:590px;width:25px;text-align:center;font-size:13px;color:#333">2</div>
<div class="a" style="left:41px;top:626px;width:1368px;height:1px;background:#d4d4d4;"></div>
<div class="a" style="left:15px;top:626px;width:26px;height:1px;background:#c6c6c6;"></div>
<div class="a nw" style="left:15px;top:610px;width:25px;text-align:center;font-size:13px;color:#333">3</div>
<div class="a" style="left:41px;top:646px;width:1368px;height:1px;background:#d4d4d4;"></div>
<div class="a" style="left:15px;top:646px;width:26px;height:1px;background:#c6c6c6;"></div>
<div class="a nw" style="left:15px;top:630px;width:25px;text-align:center;font-size:13px;color:#333">4</div>
<div class="a" style="left:41px;top:666px;width:1368px;height:1px;background:#d4d4d4;"></div>
<div class="a" style="left:15px;top:666px;width:26px;height:1px;background:#c6c6c6;"></div>
<div class="a nw" style="left:15px;top:650px;width:25px;text-align:center;font-size:13px;color:#333">5</div>
<div class="a" style="left:41px;top:686px;width:1368px;height:1px;background:#d4d4d4;"></div>
<div class="a" style="left:15px;top:686px;width:26px;height:1px;background:#c6c6c6;"></div>
<div class="a nw" style="left:15px;top:670px;width:25px;text-align:center;font-size:13px;color:#333">6</div>
<div class="a" style="left:41px;top:706px;width:1368px;height:1px;background:#d4d4d4;"></div>
<div class="a" style="left:15px;top:706px;width:26px;height:1px;background:#c6c6c6;"></div>
<div class="a nw" style="left:15px;top:690px;width:25px;text-align:center;font-size:13px;color:#333">7</div>
<div class="a" style="left:41px;top:726px;width:1368px;height:1px;background:#d4d4d4;"></div>
<div class="a" style="left:15px;top:726px;width:26px;height:1px;background:#c6c6c6;"></div>
<div class="a nw" style="left:15px;top:710px;width:25px;text-align:center;font-size:13px;color:#333">8</div>
<div class="a" style="left:41px;top:746px;width:1368px;height:1px;background:#d4d4d4;"></div>
<div class="a" style="left:15px;top:746px;width:26px;height:1px;background:#c6c6c6;"></div>
<div class="a nw" style="left:15px;top:730px;width:25px;text-align:center;font-size:13px;color:#333">9</div>
<div class="a" style="left:41px;top:766px;width:1368px;height:1px;background:#d4d4d4;"></div>
<div class="a" style="left:15px;top:766px;width:26px;height:1px;background:#c6c6c6;"></div>
<div class="a nw" style="left:15px;top:750px;width:25px;text-align:center;font-size:13px;color:#333">10</div>
<div class="a" style="left:41px;top:786px;width:1368px;height:1px;background:#d4d4d4;"></div>
<div class="a" style="left:15px;top:786px;width:26px;height:1px;background:#c6c6c6;"></div>
<div class="a nw" style="left:15px;top:770px;width:25px;text-align:center;font-size:13px;color:#333">11</div>
<div class="a" style="left:41px;top:806px;width:1368px;height:1px;background:#d4d4d4;"></div>
<div class="a" style="left:15px;top:806px;width:26px;height:1px;background:#c6c6c6;"></div>
<div class="a nw" style="left:15px;top:790px;width:25px;text-align:center;font-size:13px;color:#333">12</div>
<div class="a" style="left:41px;top:826px;width:1368px;height:1px;background:#d4d4d4;"></div>
<div class="a" style="left:15px;top:826px;width:26px;height:1px;background:#c6c6c6;"></div>
<div class="a nw" style="left:15px;top:810px;width:25px;text-align:center;font-size:13px;color:#333">13</div>
<div class="a nw" style="left:15px;top:830px;width:25px;text-align:center;font-size:13px;color:#333">14</div>
<div class="a" style="left:41px;top:586px;width:1368px;height:1px;background:#ababab;"></div>
<div class="a nw" style="left:43px;top:570px;font-size:13px;color:#000;font-weight:bold;">Date</div>
<div class="a" style="left:113px;top:568px;width:17px;height:17px;background:#f0f0f0;border:1px solid #a8a8a8;"></div>
<svg class="a" style="left:118px;top:575px" width="7" height="4" viewBox="0 0 7 4"><path d="M0 0H7L3.5 4z" fill="#555"/></svg>
<div class="a nw" style="left:133px;top:570px;font-size:13px;color:#000;font-weight:bold;">Reference</div>
<div class="a" style="left:223px;top:568px;width:17px;height:17px;background:#f0f0f0;border:1px solid #a8a8a8;"></div>
<svg class="a" style="left:228px;top:575px" width="7" height="4" viewBox="0 0 7 4"><path d="M0 0H7L3.5 4z" fill="#555"/></svg>
<div class="a nw" style="left:243px;top:570px;font-size:13px;color:#000;font-weight:bold;">Name</div>
<div class="a" style="left:373px;top:568px;width:17px;height:17px;background:#f0f0f0;border:1px solid #a8a8a8;"></div>
<svg class="a" style="left:378px;top:575px" width="7" height="4" viewBox="0 0 7 4"><path d="M0 0H7L3.5 4z" fill="#555"/></svg>
<div class="a nw" style="left:393px;top:570px;font-size:13px;color:#000;font-weight:bold;">Item Name</div>
<div class="a" style="left:523px;top:568px;width:17px;height:17px;background:#f0f0f0;border:1px solid #a8a8a8;"></div>
<svg class="a" style="left:528px;top:575px" width="7" height="4" viewBox="0 0 7 4"><path d="M0 0H7L3.5 4z" fill="#555"/></svg>
<div class="a nw" style="left:543px;top:570px;font-size:13px;color:#000;font-weight:bold;">Description</div>
<div class="a" style="left:863px;top:568px;width:17px;height:17px;background:#f0f0f0;border:1px solid #a8a8a8;"></div>
<svg class="a" style="left:868px;top:575px" width="7" height="4" viewBox="0 0 7 4"><path d="M0 0H7L3.5 4z" fill="#555"/></svg>
<div class="a nw" style="left:883px;top:570px;font-size:13px;color:#000;font-weight:bold;">Qty</div>
<div class="a" style="left:993px;top:568px;width:17px;height:17px;background:#f0f0f0;border:1px solid #a8a8a8;"></div>
<svg class="a" style="left:998px;top:575px" width="7" height="4" viewBox="0 0 7 4"><path d="M0 0H7L3.5 4z" fill="#555"/></svg>
<div class="a nw" style="left:1013px;top:570px;font-size:13px;color:#000;font-weight:bold;">Rate</div>
<div class="a" style="left:1123px;top:568px;width:17px;height:17px;background:#f0f0f0;border:1px solid #a8a8a8;"></div>
<svg class="a" style="left:1128px;top:575px" width="7" height="4" viewBox="0 0 7 4"><path d="M0 0H7L3.5 4z" fill="#555"/></svg>
<div class="a nw" style="left:1143px;top:570px;font-size:13px;color:#000;font-weight:bold;">Total</div>
<div class="a" style="left:1253px;top:568px;width:17px;height:17px;background:#f0f0f0;border:1px solid #a8a8a8;"></div>
<svg class="a" style="left:1258px;top:575px" width="7" height="4" viewBox="0 0 7 4"><path d="M0 0H7L3.5 4z" fill="#555"/></svg>
<div class="a nw cl" style="left:41px;top:590.3px;width:86px;text-align:right;font-size:13.3px;">12/22/2020</div>
<div class="a nw cl" style="left:133px;top:591.1px;font-size:12.4px;">IRC-0013202</div>
<div class="a nw cl" style="left:243px;top:589.6px;font-size:14px;">Vendor 2</div>
<div class="a nw cl" style="left:393px;top:589.6px;font-size:14px;">Item 1</div>
<div class="a nw cl" style="left:543px;top:589.6px;font-size:14px;">Description for the Item 1</div>
<div class="a nw cl" style="left:881px;top:590.8px;width:126px;text-align:right;font-size:12.7px;">9</div>
<div class="a nw cl" style="left:1018px;top:590.8px;font-size:12.7px;">$</div>
<div class="a nw cl" style="left:1148px;top:590.8px;font-size:12.7px;">$</div>
<div class="a nw cl" style="left:1011px;top:590.8px;width:122px;text-align:right;font-size:12.7px;">7.00</div>
<div class="a nw cl" style="left:1141px;top:590.8px;width:122px;text-align:right;font-size:12.7px;">63.00</div>
<div class="a nw cl" style="left:41px;top:610.3px;width:86px;text-align:right;font-size:13.3px;">12/23/2020</div>
<div class="a nw cl" style="left:133px;top:611.1px;font-size:12.4px;">IRC-0013171</div>
<div class="a nw cl" style="left:243px;top:609.6px;font-size:14px;">Vendor 2</div>
<div class="a nw cl" style="left:393px;top:609.6px;font-size:14px;">Item 1</div>
<div class="a nw cl" style="left:543px;top:609.6px;font-size:14px;">Description for the Item 1</div>
<div class="a nw cl" style="left:881px;top:610.8px;width:126px;text-align:right;font-size:12.7px;">3</div>
<div class="a nw cl" style="left:1018px;top:610.8px;font-size:12.7px;">$</div>
<div class="a nw cl" style="left:1148px;top:610.8px;font-size:12.7px;">$</div>
<div class="a nw cl" style="left:1011px;top:610.8px;width:122px;text-align:right;font-size:12.7px;">7.00</div>
<div class="a nw cl" style="left:1141px;top:610.8px;width:122px;text-align:right;font-size:12.7px;">21.00</div>
<div class="a nw cl" style="left:41px;top:630.3px;width:86px;text-align:right;font-size:13.3px;">1/6/2021</div>
<div class="a nw cl" style="left:133px;top:631.1px;font-size:12.4px;">IRC-0013337</div>
<div class="a nw cl" style="left:243px;top:629.6px;font-size:14px;">Vendor 1</div>
<div class="a nw cl" style="left:393px;top:629.6px;font-size:14px;">Item 1</div>
<div class="a nw cl" style="left:543px;top:629.6px;font-size:14px;">Description for the Item 1</div>
<div class="a nw cl" style="left:881px;top:630.8px;width:126px;text-align:right;font-size:12.7px;">108</div>
<div class="a nw cl" style="left:1018px;top:630.8px;font-size:12.7px;">$</div>
<div class="a nw cl" style="left:1148px;top:630.8px;font-size:12.7px;">$</div>
<div class="a nw cl" style="left:1011px;top:630.8px;width:122px;text-align:right;font-size:12.7px;">7.00</div>
<div class="a nw cl" style="left:1141px;top:630.8px;width:122px;text-align:right;font-size:12.7px;">756.00</div>
<div class="a nw cl" style="left:41px;top:650.3px;width:86px;text-align:right;font-size:13.3px;">1/6/2021</div>
<div class="a nw cl" style="left:133px;top:651.1px;font-size:12.4px;">IRC-0013339</div>
<div class="a nw cl" style="left:243px;top:649.6px;font-size:14px;">Vendor 2</div>
<div class="a nw cl" style="left:393px;top:649.6px;font-size:14px;">Item 1</div>
<div class="a nw cl" style="left:543px;top:649.6px;font-size:14px;">Description for the Item 1</div>
<div class="a nw cl" style="left:881px;top:650.8px;width:126px;text-align:right;font-size:12.7px;">108</div>
<div class="a nw cl" style="left:1018px;top:650.8px;font-size:12.7px;">$</div>
<div class="a nw cl" style="left:1148px;top:650.8px;font-size:12.7px;">$</div>
<div class="a nw cl" style="left:1011px;top:650.8px;width:122px;text-align:right;font-size:12.7px;">7.00</div>
<div class="a nw cl" style="left:1141px;top:650.8px;width:122px;text-align:right;font-size:12.7px;">756.00</div>
<div class="a nw cl" style="left:41px;top:670.3px;width:86px;text-align:right;font-size:13.3px;">1/6/2021</div>
<div class="a nw cl" style="left:133px;top:671.1px;font-size:12.4px;">IRC-0013341</div>
<div class="a nw cl" style="left:243px;top:669.6px;font-size:14px;">Vendor 1</div>
<div class="a nw cl" style="left:393px;top:669.6px;font-size:14px;">Item 1</div>
<div class="a nw cl" style="left:543px;top:669.6px;font-size:14px;">Description for the Item 1</div>
<div class="a nw cl" style="left:881px;top:670.8px;width:126px;text-align:right;font-size:12.7px;">108</div>
<div class="a nw cl" style="left:1018px;top:670.8px;font-size:12.7px;">$</div>
<div class="a nw cl" style="left:1148px;top:670.8px;font-size:12.7px;">$</div>
<div class="a nw cl" style="left:1011px;top:670.8px;width:122px;text-align:right;font-size:12.7px;">7.00</div>
<div class="a nw cl" style="left:1141px;top:670.8px;width:122px;text-align:right;font-size:12.7px;">756.00</div>
<div class="a nw cl" style="left:41px;top:690.3px;width:86px;text-align:right;font-size:13.3px;">1/13/2021</div>
<div class="a nw cl" style="left:133px;top:691.1px;font-size:12.4px;">KC25-1</div>
<div class="a nw cl" style="left:243px;top:689.6px;font-size:14px;">Kat Cat</div>
<div class="a nw cl" style="left:393px;top:689.6px;font-size:14px;">Item 1</div>
<div class="a nw cl" style="left:543px;top:689.6px;font-size:14px;">Description for the Item 1</div>
<div class="a nw cl" style="left:881px;top:690.8px;width:126px;text-align:right;font-size:12.7px;">3</div>
<div class="a nw cl" style="left:1018px;top:690.8px;font-size:12.7px;">$</div>
<div class="a nw cl" style="left:1148px;top:690.8px;font-size:12.7px;">$</div>
<div class="a nw cl" style="left:1011px;top:690.8px;width:108px;text-align:right;font-size:12.7px;">-</div>
<div class="a nw cl" style="left:1141px;top:690.8px;width:108px;text-align:right;font-size:12.7px;">-</div>
<div class="a nw cl" style="left:41px;top:710.3px;width:86px;text-align:right;font-size:13.3px;">1/13/2021</div>
<div class="a nw cl" style="left:133px;top:711.1px;font-size:12.4px;">IRC-0013362</div>
<div class="a nw cl" style="left:243px;top:709.6px;font-size:14px;">Vendor 1</div>
<div class="a nw cl" style="left:393px;top:709.6px;font-size:14px;">Item 1</div>
<div class="a nw cl" style="left:543px;top:709.6px;font-size:14px;">Description for the Item 1</div>
<div class="a nw cl" style="left:881px;top:710.8px;width:126px;text-align:right;font-size:12.7px;">3</div>
<div class="a nw cl" style="left:1018px;top:710.8px;font-size:12.7px;">$</div>
<div class="a nw cl" style="left:1148px;top:710.8px;font-size:12.7px;">$</div>
<div class="a nw cl" style="left:1011px;top:710.8px;width:122px;text-align:right;font-size:12.7px;">7.00</div>
<div class="a nw cl" style="left:1141px;top:710.8px;width:122px;text-align:right;font-size:12.7px;">21.00</div>
<div class="a nw cl" style="left:41px;top:730.3px;width:86px;text-align:right;font-size:13.3px;">1/13/2021</div>
<div class="a nw cl" style="left:133px;top:731.1px;font-size:12.4px;">IRC-0013364</div>
<div class="a nw cl" style="left:243px;top:729.6px;font-size:14px;">Vendor 1</div>
<div class="a nw cl" style="left:393px;top:729.6px;font-size:14px;">Item 1</div>
<div class="a nw cl" style="left:543px;top:729.6px;font-size:14px;">Description for the Item 1</div>
<div class="a nw cl" style="left:881px;top:730.8px;width:126px;text-align:right;font-size:12.7px;">3</div>
<div class="a nw cl" style="left:1018px;top:730.8px;font-size:12.7px;">$</div>
<div class="a nw cl" style="left:1148px;top:730.8px;font-size:12.7px;">$</div>
<div class="a nw cl" style="left:1011px;top:730.8px;width:122px;text-align:right;font-size:12.7px;">7.00</div>
<div class="a nw cl" style="left:1141px;top:730.8px;width:122px;text-align:right;font-size:12.7px;">21.00</div>
<div class="a nw cl" style="left:41px;top:750.3px;width:86px;text-align:right;font-size:13.3px;">1/14/2021</div>
<div class="a nw cl" style="left:133px;top:751.1px;font-size:12.4px;">IRC-0013366</div>
<div class="a nw cl" style="left:243px;top:749.6px;font-size:14px;">Vendor 1</div>
<div class="a nw cl" style="left:393px;top:749.6px;font-size:14px;">Item 1</div>
<div class="a nw cl" style="left:543px;top:749.6px;font-size:14px;">Description for the Item 1</div>
<div class="a nw cl" style="left:881px;top:750.8px;width:126px;text-align:right;font-size:12.7px;">36</div>
<div class="a nw cl" style="left:1018px;top:750.8px;font-size:12.7px;">$</div>
<div class="a nw cl" style="left:1148px;top:750.8px;font-size:12.7px;">$</div>
<div class="a nw cl" style="left:1011px;top:750.8px;width:122px;text-align:right;font-size:12.7px;">7.00</div>
<div class="a nw cl" style="left:1141px;top:750.8px;width:122px;text-align:right;font-size:12.7px;">252.00</div>
<div class="a nw cl" style="left:41px;top:770.3px;width:86px;text-align:right;font-size:13.3px;">1/20/2021</div>
<div class="a nw cl" style="left:133px;top:771.1px;font-size:12.4px;">IRC-0013401</div>
<div class="a nw cl" style="left:243px;top:769.6px;font-size:14px;">Vendor 1</div>
<div class="a nw cl" style="left:393px;top:769.6px;font-size:14px;">Item 1</div>
<div class="a nw cl" style="left:543px;top:769.6px;font-size:14px;">Description for the Item 1</div>
<div class="a nw cl" style="left:881px;top:770.8px;width:126px;text-align:right;font-size:12.7px;">3</div>
<div class="a nw cl" style="left:1018px;top:770.8px;font-size:12.7px;">$</div>
<div class="a nw cl" style="left:1148px;top:770.8px;font-size:12.7px;">$</div>
<div class="a nw cl" style="left:1011px;top:770.8px;width:122px;text-align:right;font-size:12.7px;">7.00</div>
<div class="a nw cl" style="left:1141px;top:770.8px;width:122px;text-align:right;font-size:12.7px;">21.00</div>
<div class="a nw cl" style="left:543px;top:790.5px;font-size:13px;font-weight:bold;">Total:</div>
<div class="a nw cl" style="left:881px;top:790.8px;width:126px;text-align:right;font-size:12.7px;font-weight:bold;">384</div>
<div class="a nw cl" style="left:1148px;top:790.8px;font-size:12.7px;font-weight:bold;">$</div>
<div class="a nw cl" style="left:1141px;top:790.8px;width:122px;text-align:right;font-size:12.7px;font-weight:bold;">2,667.00</div>
<div class="a" style="left:1267px;top:801px;width:2px;height:2px;background:#3b55a0;"></div>
<div class="a" style="left:1410px;top:547px;width:21px;height:293px;background:#e6e6e6;"></div>
<div class="a" style="left:1413px;top:549px;width:15px;height:15px;background:#fff;border:1px solid #c6c6c6;"></div>
<svg class="a" style="left:1416px;top:554px" width="9" height="5" viewBox="0 0 9 5"><path d="M0 5h9L4.5 0z" fill="#666"/></svg>
<div class="a" style="left:1413px;top:564px;width:15px;height:163px;background:#fff;border:1px solid #c6c6c6;"></div>
<div class="a" style="left:1413px;top:727px;width:15px;height:97px;background:#dcdcdc;"></div>
<div class="a" style="left:1413px;top:824px;width:15px;height:15px;background:#fff;border:1px solid #c6c6c6;"></div>
<svg class="a" style="left:1416px;top:829px" width="9" height="5" viewBox="0 0 9 5"><path d="M0 0h9L4.5 5z" fill="#666"/></svg>
<div class="a" style="left:15px;top:840px;width:1416px;height:29px;background:#e6e6e6;border-top:1px solid #9b9b9b;border-bottom:1px solid #c6c6c6"></div>
<svg class="a" style="left:41px;top:849px" width="5" height="8" viewBox="0 0 5 8"><path d="M5 0V8L0 4z" fill="#bdbdbd"/></svg>
<svg class="a" style="left:70px;top:849px" width="5" height="8" viewBox="0 0 5 8"><path d="M0 0V8L5 4z" fill="#1e6e41"/></svg>
<div class="a" style="left:115px;top:840px;width:108px;height:25px;background:#fff;border-left:1px solid #9b9b9b;border-right:1px solid #9b9b9b"></div>
<div class="a" style="left:116px;top:863px;width:106px;height:2px;background:#217346;"></div>
<div class="a nw" style="left:127px;top:846px;font-size:12.6px;color:#1e6e41;font-weight:bold;">Item Receipts</div>
<div class="a nw" style="left:238px;top:846px;font-size:13px;color:#444;font-weight:normal;">Open Vendor Consignments</div>
<div class="a" style="left:420px;top:845px;width:1px;height:18px;background:#aaa;"></div>
<div class="a" style="left:533px;top:845px;width:1px;height:18px;background:#aaa;"></div>
<div class="a" style="left:647px;top:845px;width:1px;height:18px;background:#aaa;"></div>
<div class="a nw" style="left:436px;top:846px;font-size:12.4px;color:#444;font-weight:normal;">Bills In Review</div>
<div class="a nw" style="left:548px;top:846px;font-size:13.1px;color:#444;font-weight:normal;">Bills Approved</div>
<div class="a nw" style="left:664px;top:846px;font-size:12.4px;color:#444;font-weight:normal;">Bill Linked Expenses</div>
<div class="a nw" style="left:803px;top:845px;font-size:14px;color:#1e6e41;font-weight:bold;">...</div>
<svg class="a" style="left:828px;top:846px" width="16" height="16" viewBox="0 0 16 16"><circle cx="8" cy="8" r="7" fill="none" stroke="#b8b8b8" stroke-width="1.1"/><path d="M8 4v8M4 8h8" stroke="#b8b8b8" stroke-width="1.2"/></svg>
<svg class="a" style="left:864px;top:847px" width="3" height="12" viewBox="0 0 3 12"><circle cx="1.5" cy="1.5" r="1" fill="#999"/><circle cx="1.5" cy="6" r="1" fill="#999"/><circle cx="1.5" cy="10.5" r="1" fill="#999"/></svg>
<div class="a" style="left:881px;top:847px;width:526px;height:15px;background:#dcdcdc;"></div>
<div class="a" style="left:881px;top:847px;width:15px;height:15px;background:#fff;border:1px solid #c6c6c6;"></div>
<svg class="a" style="left:886px;top:851px" width="5" height="8" viewBox="0 0 5 8"><path d="M5 0V8L0 4z" fill="#666"/></svg>
<div class="a" style="left:896px;top:847px;width:446px;height:15px;background:#fff;border:1px solid #c6c6c6;"></div>
<div class="a" style="left:1392px;top:847px;width:15px;height:15px;background:#fff;border:1px solid #c6c6c6;"></div>
<svg class="a" style="left:1397px;top:851px" width="5" height="8" viewBox="0 0 5 8"><path d="M0 0V8L5 4z" fill="#666"/></svg>
<div class="a" style="left:15px;top:869px;width:1416px;height:21px;background:#f3f3f3;"></div>
<div class="a" style="left:1120px;top:869px;width:40px;height:21px;background:#c6c6c6;"></div>
<svg class="a" style="left:1132px;top:872px" width="14" height="14" viewBox="0 0 14 14"><path d="M0.5 0.5h13v13h-13zM0.5 4.8h13M0.5 9.2h13M4.8 0.5v13M9.2 0.5v13" fill="none" stroke="#555" stroke-width="1"/></svg>
<svg class="a" style="left:1173px;top:872px" width="14" height="14" viewBox="0 0 14 14"><path d="M0.5 0.5h13v13h-13z" fill="none" stroke="#666"/><path d="M3.5 2.5h7v9h-7zM5 5h4M5 7h4M5 9h4" fill="none" stroke="#666" stroke-width="0.8"/></svg>
<svg class="a" style="left:1212px;top:872px" width="14" height="14" viewBox="0 0 14 14"><path d="M0.5 0.5h13v13h-13zM0.5 9.5h6.5V0.5M7 5h6.5" fill="none" stroke="#666"/></svg>
<svg class="a" style="left:1245px;top:878px" width="9" height="2" viewBox="0 0 9 2"><path d="M0 1h9" stroke="#555" stroke-width="1.2"/></svg>
<div class="a" style="left:1259px;top:878px;width:100px;height:1px;background:#b8b8b8;"></div>
<div class="a" style="left:1306px;top:873px;width:5px;height:11px;background:#666;"></div>
<svg class="a" style="left:1363px;top:874px" width="9" height="9" viewBox="0 0 9 9"><path d="M0 4.5h9M4.5 0v9" stroke="#444" stroke-width="1"/></svg>
<div class="a nw" style="left:1385px;top:873px;font-size:11px;color:#333;font-weight:normal;">100%</div>

</body></html>
